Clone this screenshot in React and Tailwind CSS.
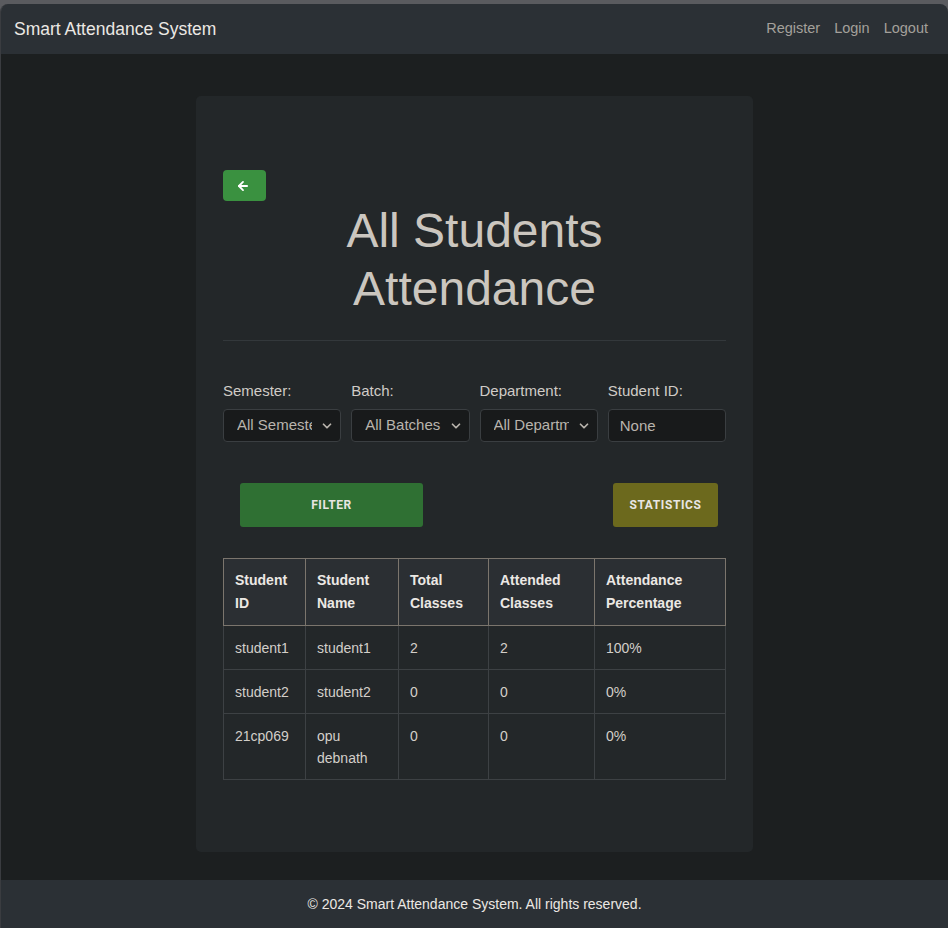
import { ArrowLeft, ChevronDown } from "lucide-react";

const rows = [
  { id: "student1", name: ["student1"], total: "2", attended: "2", pct: "100%" },
  { id: "student2", name: ["student2"], total: "0", attended: "0", pct: "0%" },
  { id: "21cp069", name: ["opu", "debnath"], total: "0", attended: "0", pct: "0%" },
];

const FilterSelect = ({ label, value }) => (
  <div className="flex flex-col">
    <label className="text-[15px] leading-[18px] text-[#d0ccc7] mb-[9px]">{label}</label>
    <div className="relative">
      <select
        defaultValue={value}
        className="appearance-none w-full h-[33px] bg-[#181a1b] border border-[#3a3e41] rounded-[4px] pl-[13px] pr-[28px] text-[15px] text-[#b9b4ad] outline-none"
      >
        <option>{value}</option>
      </select>
      <ChevronDown
        size={14}
        strokeWidth={3}
        className="absolute right-[7px] top-[10px] text-[#b9b4ad] pointer-events-none"
      />
    </div>
  </div>
);

export default function App() {
  return (
    <div className="bg-[#5a5b5f] pt-[4px] min-h-[928px] font-['Liberation_Sans',Arial,sans-serif]">
      <div className="min-h-[924px] flex flex-col rounded-t-[8px] overflow-hidden border-l border-[#3a3c40]">
        {/* navbar */}
        <nav className="h-[50px] bg-[#2b3035] flex items-center justify-between pl-[13px] pr-[20px]">
          <span className="text-[17.5px] text-[#ebe8e4]">Smart Attendance System</span>
          <div className="flex items-center gap-[14px] text-[14.5px] text-[#a4a09b]">
            <a>Register</a>
            <a>Login</a>
            <a>Logout</a>
          </div>
        </nav>

        <main className="flex-1 bg-[#1c1f20] pt-[42px] pb-[28px] flex justify-center">
          <div className="w-[557px] bg-[#232729] rounded-[5px] px-[27px] pt-[74px] pb-[72px]">
            <button className="w-[43px] h-[31px] bg-[#3a9140] rounded-[4px] flex items-center justify-center">
              <ArrowLeft size={14} strokeWidth={3.2} className="text-white -ml-[3px]" />
            </button>
            <h1 className="text-center text-[48px] leading-[58px] text-[#cbc6bf] mt-[1px]">
              All Students
              <br />
              Attendance
            </h1>
            <hr className="border-t border-[#33383b] mt-[22px]" />

            <div className="grid grid-cols-4 gap-[10px] mt-[41px]">
              <FilterSelect label="Semester:" value="All Semesters" />
              <FilterSelect label="Batch:" value="All Batches" />
              <FilterSelect label="Department:" value="All Departments" />
              <div className="flex flex-col">
                <label className="text-[15px] leading-[18px] text-[#d0ccc7] mb-[9px]">Student ID:</label>
                <input
                  defaultValue="None"
                  className="w-full h-[33px] bg-[#181a1b] border border-[#3a3e41] rounded-[4px] px-[11px] text-[15px] text-[#b9b4ad] outline-none"
                />
              </div>
            </div>

            <div className="flex justify-between pl-[17px] pr-[8px] mt-[41px]">
              <button className="w-[183px] h-[44px] bg-[#2f7033] rounded-[3px] text-[12px] font-bold tracking-[0.6px] text-[#e8e6e3] font-['Roboto',sans-serif]">
                FILTER
              </button>
              <button className="w-[105px] h-[44px] bg-[#6c691d] rounded-[3px] text-[12px] font-bold tracking-[0.6px] text-[#e8e6e3] font-['Roboto',sans-serif]">
                STATISTICS
              </button>
            </div>

            <table className="w-full mt-[31px] border-collapse text-[14px]">
              <thead>
                <tr className="bg-[#2b2f33] text-[#ebe8e4] font-bold leading-[23px] text-left">
                  <th className="w-[82px] h-[67px] border border-[#7b756d] pl-[11px] align-middle">Student<br />ID</th>
                  <th className="w-[93px] border border-[#7b756d] pl-[11px]">Student<br />Name</th>
                  <th className="w-[90px] border border-[#7b756d] pl-[11px]">Total<br />Classes</th>
                  <th className="w-[106px] border border-[#7b756d] pl-[11px]">Attended<br />Classes</th>
                  <th className="border border-[#7b756d] pl-[11px]">Attendance<br />Percentage</th>
                </tr>
              </thead>
              <tbody className="text-[#d3cfc9] leading-[22px]">
                {rows.map((r) => (
                  <tr key={r.id}>
                    <td className="border border-[#3d4144] pl-[11px] pt-[11px] pb-[10px] align-top">{r.id}</td>
                    <td className="border border-[#3d4144] pl-[11px] pt-[11px] pb-[10px] align-top">
                      {r.name.map((n) => (
                        <div key={n}>{n}</div>
                      ))}
                    </td>
                    <td className="border border-[#3d4144] pl-[11px] pt-[11px] pb-[10px] align-top">{r.total}</td>
                    <td className="border border-[#3d4144] pl-[11px] pt-[11px] pb-[10px] align-top">{r.attended}</td>
                    <td className="border border-[#3d4144] pl-[11px] pt-[11px] pb-[10px] align-top">{r.pct}</td>
                  </tr>
                ))}
              </tbody>
            </table>
          </div>
        </main>

        <footer className="h-[48px] bg-[#2b3035] flex items-center justify-center text-[14px] text-[#ebe8e4]">
          © 2024 Smart Attendance System. All rights reserved.
        </footer>
      </div>
    </div>
  );
}
